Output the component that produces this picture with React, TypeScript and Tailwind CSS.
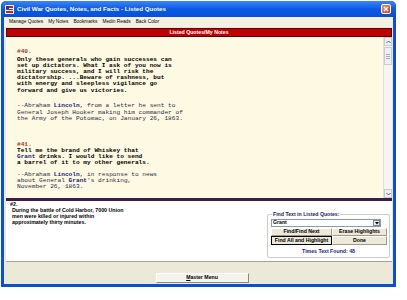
import React from "react";

const Q = ({ children }: { children: React.ReactNode }) => (
  <div className="h-[6.2px] leading-[6.2px] whitespace-pre">{children}</div>
);

const B = ({ children }: { children: React.ReactNode }) => (
  <span className="font-bold text-[#1c1c7a]">{children}</span>
);

export default function App() {
  return (
    <div className="w-[407px] h-[300px] bg-white relative overflow-hidden font-['Liberation_Sans',Arial,sans-serif]">
      <div className="absolute left-[1px] top-[1px] w-[395px] h-[286px] flex flex-col bg-[#0b4fd8] rounded-t-[5px] overflow-hidden">
        {/* Title bar */}
        <div className="h-[16px] flex items-center pl-[4px] pr-[4px] bg-gradient-to-b from-[#3c84f4] via-[#0a5ae6] to-[#0650d8]">
          <svg width="9" height="9" viewBox="0 0 9 9" className="shrink-0">
            <rect x="0" y="0" width="9" height="9" fill="#f2f2f2" />
            <rect x="1" y="1" width="7" height="7" fill="#c81e1e" />
            <rect x="1" y="1" width="3" height="3" fill="#1e3c9c" />
            <rect x="4" y="3" width="4" height="1" fill="#ffffff" />
            <rect x="1" y="5" width="7" height="1" fill="#ffffff" />
          </svg>
          <span className="ml-[3px] text-white font-bold text-[6.2px] leading-none whitespace-nowrap">
            Civil War Quotes, Notes, and Facts - Listed Quotes
          </span>
          <div className="ml-auto mr-[1px] w-[10px] h-[10px] rounded-[2px] bg-gradient-to-br from-[#f08a6a] to-[#d2401c] border border-white flex items-center justify-center">
            <svg width="6" height="6" viewBox="0 0 6 6">
              <path d="M1 1 L5 5 M5 1 L1 5" stroke="white" strokeWidth="1.3" />
            </svg>
          </div>
        </div>
        {/* Client */}
        <div className="flex-1 flex flex-col mx-[3px] mb-[3px] bg-[#ece9d8]">
          <div className="h-[10px] bg-[#f3f1e6] flex items-center gap-[5px] pl-[5px] text-[4.8px] text-black leading-none whitespace-nowrap">
            <span>Manage Quotes</span>
            <span>My Notes</span>
            <span>Bookmarks</span>
            <span>Medin Reads</span>
            <span>Back Color</span>
          </div>
          <div className="h-[1px]" />
          <div className="flex flex-col pl-[2px] pr-[1px]">
            <div className="h-[9px] bg-[#c00000] border border-[#5a0000] flex items-center justify-center text-white font-bold text-[5.2px] leading-none">
              Listed Quotes/My Notes
            </div>
            <div className="h-[161px] flex bg-[#fef9e2]">
              <div className="flex-1 pl-[11px] pt-[12px] font-['Liberation_Mono','Courier_New',monospace] text-[6.15px] text-black">
                <Q><span className="font-bold text-[#9a4020]">#40.</span></Q>
                <div className="h-[1.5px]" />
                <div className="font-bold">
                  <Q>Only these generals who gain successes can</Q>
                  <Q>set up dictators. What I ask of you now is</Q>
                  <Q>military success, and I will risk the</Q>
                  <Q>dictatorship. ...Beware of rashness, but</Q>
                  <Q>with energy and sleepless vigilance go</Q>
                  <Q>forward and give us victories.</Q>
                </div>
                <div className="h-[9.5px]" />
                <div className="text-[#2a2a4a]">
                  <Q>--Abraham <B>Lincoln</B>, from a letter he sent to</Q>
                  <Q>General Joseph Hooker making him commander of</Q>
                  <Q>the Army of the Potomac, on January 26, 1863.</Q>
                </div>
                <div className="h-[20px]" />
                <Q><span className="font-bold text-[#9a4020]">#41.</span></Q>
                <div className="font-bold">
                  <Q>Tell me the brand of Whiskey that</Q>
                  <Q><span className="text-[#1c1c7a]">Grant</span> drinks. I would like to send</Q>
                  <Q>a barrel of it to my other generals.</Q>
                </div>
                <div className="h-[5px]" />
                <div className="text-[#2a2a4a]">
                  <Q>--Abraham <B>Lincoln</B>, in response to news</Q>
                  <Q>about General <B>Grant</B>'s drinking,</Q>
                  <Q>November 26, 1863.</Q>
                </div>
              </div>
              {/* Scrollbar */}
              <div className="w-[9px] flex flex-col bg-[#f6f5ef] border-l border-[#e4e2d6]">
                <div className="h-[9px] bg-[#eef0f4] border border-[#c8cad4] flex items-center justify-center">
                  <svg width="5" height="4" viewBox="0 0 5 4"><path d="M0.5 3 L2.5 1 L4.5 3" stroke="#4d6185" strokeWidth="1" fill="none" /></svg>
                </div>
                <div className="mt-[1px] h-[18px] bg-[#eef0f4] border border-[#c8cad4] flex flex-col items-center justify-center gap-[1px]">
                  <div className="w-[4px] h-[1px] bg-[#a8acba]" />
                  <div className="w-[4px] h-[1px] bg-[#a8acba]" />
                  <div className="w-[4px] h-[1px] bg-[#a8acba]" />
                </div>
                <div className="flex-1" />
                <div className="h-[9px] bg-[#eef0f4] border border-[#c8cad4] flex items-center justify-center">
                  <svg width="5" height="4" viewBox="0 0 5 4"><path d="M0.5 1 L2.5 3 L4.5 1" stroke="#4d6185" strokeWidth="1" fill="none" /></svg>
                </div>
              </div>
            </div>
            <div className="h-[3px] bg-[#3e1b4c]" />
            {/* White panel */}
            <div className="h-[61px] bg-white flex border-b border-[#a6a391]">
              <div className="pl-[4px] pt-[1px] text-[5.3px] font-bold text-black leading-[5.9px] whitespace-pre">
                <div>#2.</div>
                <div className="pl-[2px]">During the battle of Cold Harbor, 7000 Union</div>
                <div className="pl-[2px]">men were killed or injured within</div>
                <div className="pl-[2px]">approximately thirty minutes.</div>
              </div>
              <div className="ml-auto mr-[2px] mt-[13px] w-[123px] h-[44px] relative border border-[#cfcdbf] rounded-[2px]">
                <div className="absolute left-[4px] -top-[4px] bg-white px-[1px] text-[5.2px] font-bold text-[#1a1a6a] leading-[7px] whitespace-nowrap">
                  Find Text in Listed Quotes:
                </div>
                <div className="absolute left-[3px] top-[4px] w-[110px] h-[8px] border border-[#7f9db9] bg-white flex items-center">
                  <span className="pl-[1px] text-[5.2px] font-bold text-black leading-none">Grant</span>
                  <div className="ml-auto w-[7px] h-[6px] bg-[#ece9d8] border border-[#888] flex items-center justify-center">
                    <svg width="4" height="3" viewBox="0 0 4 3"><path d="M0 0 L4 0 L2 2.5 Z" fill="#000" /></svg>
                  </div>
                </div>
                <div className="absolute left-[3px] top-[13px] w-[116px] grid grid-cols-[61px_55px] grid-rows-[8px_9px] text-[5.2px] font-bold text-black leading-none">
                  <div className="bg-[#ece9d8] border-t border-l border-white border-r border-b border-r-[#9d9a8a] border-b-[#9d9a8a] flex items-center justify-center">Find/Find Next</div>
                  <div className="bg-[#ece9d8] border-t border-l border-white border-r border-b border-r-[#9d9a8a] border-b-[#9d9a8a] flex items-center justify-center">Erase Highlights</div>
                  <div className="bg-[#ece9d8] border border-black flex items-center justify-center">Find All and Highlight</div>
                  <div className="bg-[#ece9d8] border-t border-l border-white border-r border-b border-r-[#9d9a8a] border-b-[#9d9a8a] flex items-center justify-center">Done</div>
                </div>
                <div className="absolute left-0 right-0 top-[34px] text-center text-[5.2px] font-bold text-[#1a1a8a] leading-none">
                  Times Text Found: 48
                </div>
              </div>
            </div>
          </div>
          {/* Bottom bar */}
          <div className="flex-1 flex items-end justify-center pb-[1px]">
            <div className="ml-[7px] w-[93px] h-[10px] bg-[#f4f3ec] border-t border-l border-white border-r border-b border-r-[#8a8878] border-b-[#8a8878] flex items-center justify-center text-[5.2px] font-bold text-black leading-none">
              <span><span className="underline">M</span>aster Menu</span>
            </div>
          </div>
        </div>
      </div>
    </div>
  );
}
